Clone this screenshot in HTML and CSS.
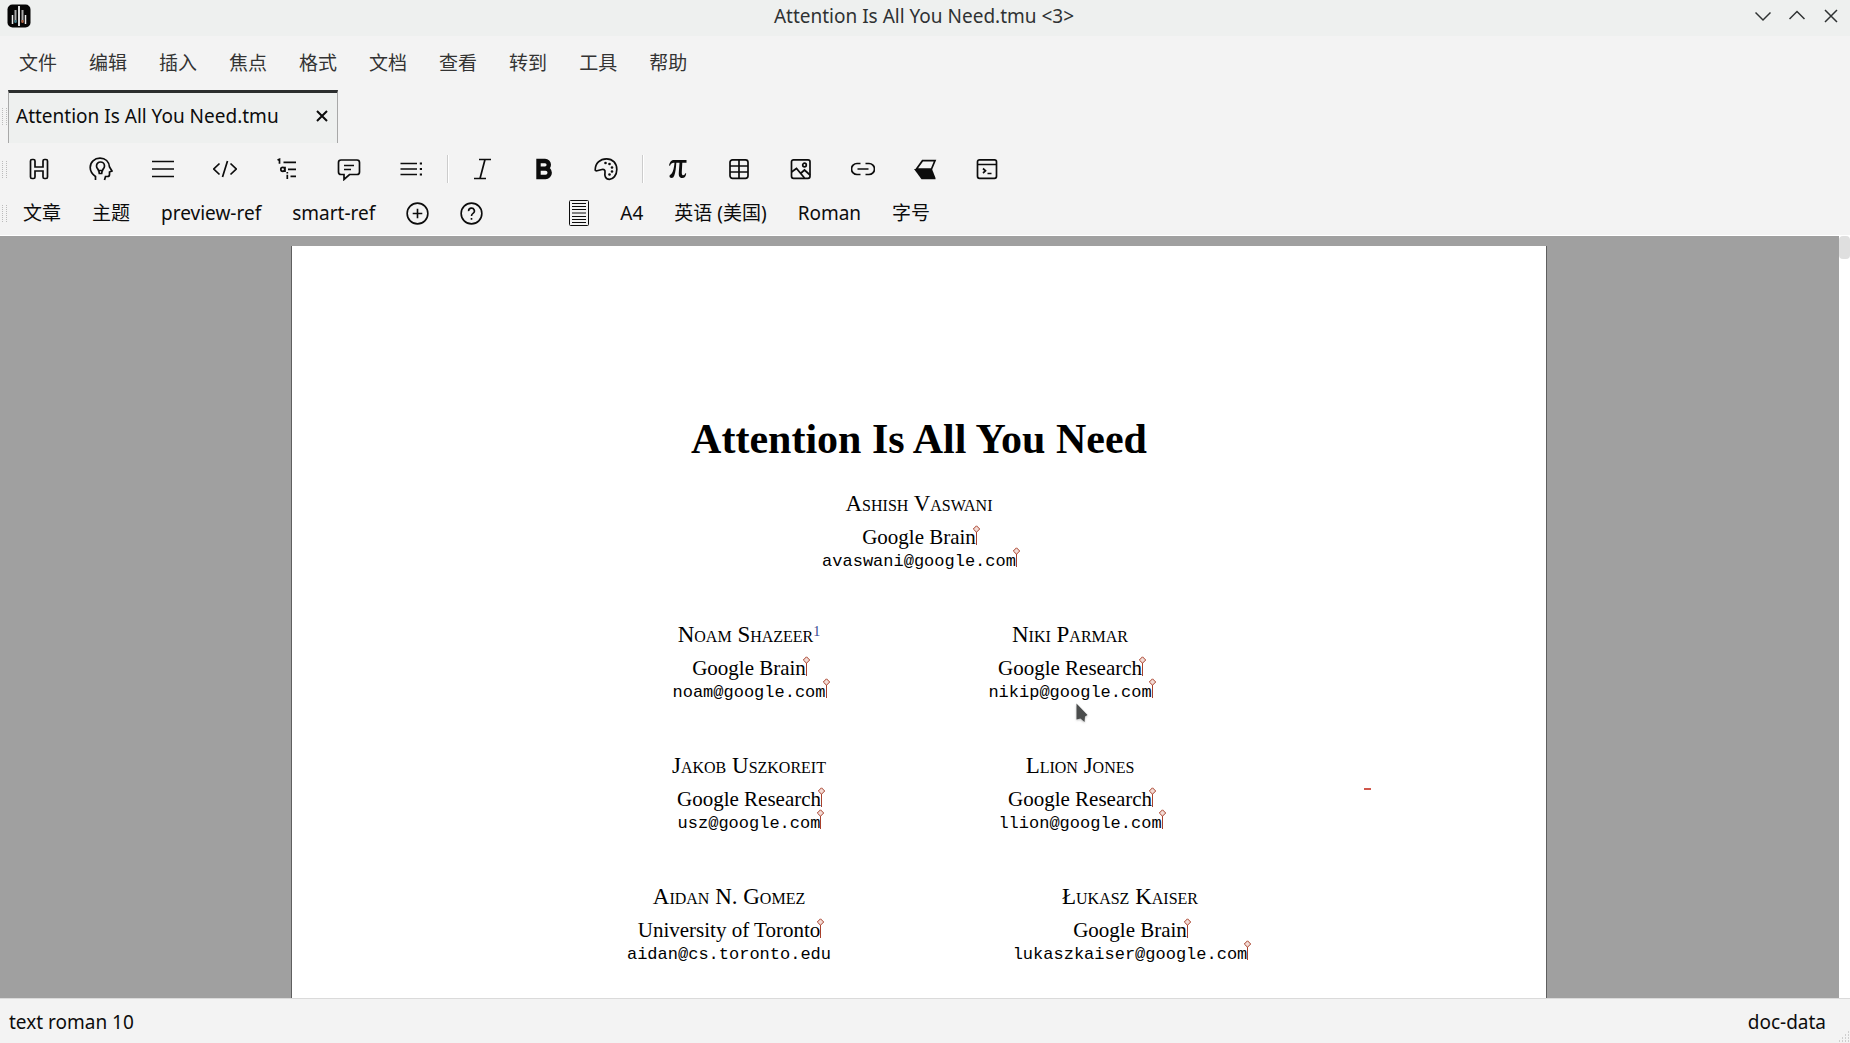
FILE: index.html
```html
<!DOCTYPE html>
<html lang="zh-CN">
<head>
  <meta charset="UTF-8">
  <meta name="viewport" content="width=device-width, initial-scale=1.0">
  <title>Attention Is All You Need.tmu</title>
  <link rel="stylesheet" href="styles.css">
</head>
<body>
  <!-- shared marker drawn at the end of a tagged line -->
  <svg class="defs" aria-hidden="true">
    <symbol id="pin" viewBox="0 0 9 20">
      <path d="M4.500 7V20" stroke="#a8402c" fill="none"/>
      <path d="M4.500 .8 7.700 4 4.500 7.200 1.300 4Z" fill="#f3dcd6" stroke="#a8402c"/>
    </symbol>
  </svg>

  <header class="titlebar">
    <svg class="app-icon" viewBox="0 0 24 24">
      <rect x=".5" y=".5" width="23" height="23" rx="5" fill="#050505"/>
      <path d="M12 2v20" stroke="#ddd" stroke-width="2"/>
      <path d="M8.500 6v12M15.500 6v12" stroke="#aaa" stroke-width="2"/>
      <path d="M5.500 11v9M18.500 11v9" stroke="#eee" stroke-width="1.500"/>
      <path d="M8.500 16v3" stroke="#3f7f8c" stroke-width="2"/>
      <path d="M15.500 16v3" stroke="#b0603f" stroke-width="2"/>
    </svg>
    <h1 class="window-title">Attention Is All You Need.tmu &lt;3&gt;</h1>
    <div class="window-buttons">
      <button aria-label="最小化"><svg viewBox="0 0 16 16"><path d="M.5 4.500 8 12l7.500-7.500"/></svg></button>
      <button aria-label="最大化"><svg viewBox="0 0 16 16"><path d="M.5 11 8 3.500 15.500 11"/></svg></button>
      <button aria-label="关闭"><svg viewBox="0 0 16 16"><path d="M2 2l12 12M14 2 2 14"/></svg></button>
    </div>
  </header>

  <nav class="menubar">
    <button>文件</button>
    <button>编辑</button>
    <button>插入</button>
    <button>焦点</button>
    <button>格式</button>
    <button>文档</button>
    <button>查看</button>
    <button>转到</button>
    <button>工具</button>
    <button>帮助</button>
  </nav>

  <div class="tabs">
    <span class="grip"></span>
    <div class="tab">
      <span>Attention Is All You Need.tmu</span>
      <button aria-label="关闭标签页"><svg viewBox="0 0 12 12"><path d="M1 1l10 10M11 1 1 11"/></svg></button>
    </div>
  </div>

  <div class="toolbar">
    <span class="grip"></span>
    <button aria-label="标题"><svg viewBox="0 0 24 24"><path d="M3.500 4q0-1.500 1.500-1.500h1.500q1.500 0 1.500 1.500v6h8V4q0-1.500 1.500-1.500H19q1.500 0 1.500 1.500v16q0 1.500-1.500 1.500h-1.500q-1.500 0-1.500-1.500v-6H8v6q0 1.500-1.500 1.500H5q-1.500 0-1.500-1.500Z"/></svg></button>
    <button aria-label="定理"><svg viewBox="0 0 24 24"><path d="M6.500 23v-3.500C3 17 1.200 14 1.200 10.500 1.200 5 5.500 1.200 11 1.200c5.500 0 9 3.800 9.500 8.800l2.500 4-2.500 1v2.500q0 2-2 2h-2L15.500 23M9.500 13.500c0-1.500-2-2-2-4.500a4 4 0 0 1 8 0c0 2.500-2 3-2 4.500ZM9.800 13.500l.5 3h2.400l.5-3"/></svg></button>
    <button aria-label="列表"><svg viewBox="0 0 24 24"><path d="M1 4.500h22M1 12h22M1 19.500h22"/></svg></button>
    <button aria-label="程序"><svg viewBox="0 0 24 24"><path d="M6.500 6.500.8 12l5.700 5.500M17.500 6.500l5.700 5.500-5.700 5.500M14.500 4l-5 16"/></svg></button>
    <button aria-label="编号"><svg viewBox="0 0 24 24"><path d="M8.500 5.300H21M13 12.300h8M15.500 19.300H21M2.500 3l2-.8v4.600M10 9.800v5.200M9.800 12.300a2 2 0 1 0-4 0 2 2 0 0 0 4 0M12.300 17.800V22M12.300 15v1.500"/></svg></button>
    <button aria-label="注释"><svg viewBox="0 0 24 24"><path d="M4 3h16q2.500 0 2.500 2.500V15q0 2.500-2.500 2.500h-7.500L7 22.500v-5H4q-2.500 0-2.500-2.500V5.500Q1.500 3 4 3ZM7 8.500h10M7 12.500h7"/></svg></button>
    <button aria-label="描述"><svg viewBox="0 0 24 24"><path d="M1.500 6.500H18M1.500 12H18M1.500 17.500H18"/><path d="M20.800 6.500h2.200M20.800 12h2.200M20.800 17.500h2.200" stroke-width="2.200"/></svg></button>
    <span class="separator"></span>
    <button aria-label="斜体"><svg viewBox="0 0 24 24"><path d="M9 2.500h12M4 21.500h12M15 2.500l-5 19"/></svg></button>
    <button aria-label="粗体"><svg viewBox="0 0 24 24"><path d="M6.500 4H13a3.800 3.800 0 0 1 0 7.600H6.500V20h7a4.200 4.200 0 0 0 0-8.400H6.500Z" stroke-width="4.400"/></svg></button>
    <button aria-label="颜色"><svg viewBox="0 0 24 24"><path d="M1.200 13C1.200 6.500 6 1.800 12.500 1.800S22.800 6.500 22.800 12.500 19 22.300 15.500 22.300c-4.500 0-5-4-4.500-7 .3-2-1-3.300-3-2.800l-4 1Q1.200 14.300 1.200 13Z"/><g class="solid"><circle cx="11.500" cy="6" r="1.300"/><circle cx="15.500" cy="7" r="1.300"/><circle cx="18" cy="10.500" r="1.300"/><circle cx="18" cy="14.500" r="1.300"/><circle cx="15.500" cy="17.500" r="1.300"/></g></svg></button>
    <span class="separator"></span>
    <button aria-label="数学"><svg viewBox="0 0 24 24"><path class="solid" d="M4 8.500C5 4.500 6.500 3 9 3h12.500v2.800h-4.200l-.5 9.200c-.1 2.500.4 3.300 1.500 3.300 1 0 1.600-.8 1.900-2l1 .2c-.4 3-1.600 4.500-4 4.500-3 0-3.600-2.300-3.400-5.500l.7-9.700h-3.200c-.3 5.500-.8 9.500-2 12.700-.6 1.700-1.500 2.500-2.800 2.500-1.200 0-2-.7-2-1.700 0-.9.5-1.500 1.500-2C8 15.500 9 11 9.500 5.800H8.800C6.800 5.800 6 6.500 5 8.800Z"/></svg></button>
    <button aria-label="表格"><svg viewBox="0 0 24 24"><rect x="3" y="2.800" width="18" height="18.500" rx="2.500"/><path d="M3 9h18M3 15h18M12 3v18"/></svg></button>
    <button aria-label="图片"><svg viewBox="0 0 24 24"><rect x="2.500" y="2.800" width="18.500" height="18.500" rx="2"/><circle cx="15.500" cy="8" r="1.800"/><path d="M2.500 15 7.500 11.500l8 9.500M11.500 16.500l4-3.500 5.500 5"/></svg></button>
    <button aria-label="链接"><svg viewBox="0 0 24 24"><path d="M9.500 6.500H6a5.500 5.500 0 0 0 0 11h3.500M14.500 6.500H18a5.500 5.500 0 0 1 0 11h-3.500M6.500 12h11"/></svg></button>
    <button aria-label="清除"><svg viewBox="0 0 24 24"><path d="M3.500 12 9.500 3.700H22L18.500 12Z"/><path class="solid" d="M1 12h18l3.500 9v1.300H8.500Z"/></svg></button>
    <button aria-label="会话"><svg viewBox="0 0 24 24"><rect x="2.500" y="2.800" width="19" height="18.500" rx="2"/><path d="M2.500 7.500h19M8 11.500l2.500 2.300L8 16M12.500 16.500h4"/></svg></button>
  </div>

  <div class="toolbar modes">
    <span class="grip"></span>
    <button>文章</button>
    <button>主题</button>
    <button>preview-ref</button>
    <button>smart-ref</button>
    <button aria-label="添加"><svg viewBox="0 0 24 24"><circle cx="12" cy="12" r="10.800"/><path d="M12 7v10M7 12h10"/></svg></button>
    <button aria-label="帮助"><svg viewBox="0 0 24 24"><circle cx="12" cy="12" r="10.800"/><path d="M9 9.500a3 3 0 1 1 4.600 2.400q-1.600 1-1.600 2.600M12 16.800v1.600"/></svg></button>
    <button class="page-format" aria-label="页面"><svg viewBox="0 0 20 26"><rect x=".5" y=".5" width="19" height="25" rx="1"/><path d="M3 3.500h14M3 6.500h14M3 19.500h14M3 22.500h14M3 9.500h14M3 13h14M3 16.500h14"/></svg></button>
    <button>A4</button>
    <button>英语 (美国)</button>
    <button>Roman</button>
    <button>字号</button>
  </div>

  <main class="canvas">
    <article class="page">
      <h2>Attention Is All You Need</h2>

      <div class="author">
        <h3>Ashish Vaswani</h3>
        <p><span>Google Brain<svg class="pin"><use href="#pin"/></svg></span></p>
        <p class="email"><span>avaswani@google.com<svg class="pin"><use href="#pin"/></svg></span></p>
      </div>

      <div class="authors first">
        <div class="author">
          <h3>Noam Shazeer<a class="note" href="#note1">1</a></h3>
          <p><span>Google Brain<svg class="pin"><use href="#pin"/></svg></span></p>
          <p class="email"><span>noam@google.com<svg class="pin"><use href="#pin"/></svg></span></p>
        </div>
        <div class="author">
          <h3>Niki Parmar</h3>
          <p><span>Google Research<svg class="pin"><use href="#pin"/></svg></span></p>
          <p class="email"><span>nikip@google.com<svg class="pin"><use href="#pin"/></svg></span></p>
        </div>
      </div>

      <div class="authors second">
        <div class="author">
          <h3>Jakob Uszkoreit</h3>
          <p><span>Google Research<svg class="pin"><use href="#pin"/></svg></span></p>
          <p class="email"><span>usz@google.com<svg class="pin"><use href="#pin"/></svg></span></p>
        </div>
        <div class="author">
          <h3>Llion Jones</h3>
          <p><span>Google Research<svg class="pin"><use href="#pin"/></svg></span></p>
          <p class="email"><span>llion@google.com<svg class="pin"><use href="#pin"/></svg></span></p>
        </div>
      </div>

      <div class="authors third">
        <div class="author">
          <h3>Aidan N. Gomez</h3>
          <p><span>University of Toronto<svg class="pin"><use href="#pin"/></svg></span></p>
          <p class="email"><span>aidan@cs.toronto.edu</span></p>
        </div>
        <div class="author">
          <h3>Łukasz Kaiser</h3>
          <p><span>Google Brain<svg class="pin"><use href="#pin"/></svg></span></p>
          <p class="email"><span>lukaszkaiser@google.com<svg class="pin"><use href="#pin"/></svg></span></p>
        </div>
      </div>

      <span class="caret"></span>
      <svg class="pointer" viewBox="0 0 12 20"><path d="M.5.500V16.500L4.500 15.500 8.500 19 9 13.500 11.500 12Z" fill="#4a4c4c"/></svg>
    </article>
    <div class="scrollbar"><div class="thumb"></div></div>
  </main>

  <footer class="statusbar">
    <span>text roman 10</span>
    <span>doc-data</span>
    <svg class="resize" viewBox="0 0 12 12"><path d="M10 1h1M7 4h1M10 4h1M4 7h1M7 7h1M10 7h1M1 10h1M4 10h1M7 10h1M10 10h1"/></svg>
  </footer>
</body>
</html>
```
FILE: styles.css
```css
* {
  box-sizing: border-box;
}
body {
  margin: 0;
  height: 100vh;
  display: flex;
  flex-direction: column;
  overflow: hidden;
  background: #f3f3f3;
  color: #0c0c0c;
  font: 19px/28px "Noto Sans", "Noto Sans CJK SC", sans-serif;
}
button {
  padding: 0;
  border: none;
  background: none;
  color: inherit;
  font: inherit;
  display: flex;
  align-items: center;
  justify-content: center;
}
svg {
  display: block;
  fill: none;
  stroke: currentColor;
  stroke-width: 1.5;
}
.defs {
  position: absolute;
  width: 0;
  height: 0;
}
.solid {
  fill: currentColor;
  stroke: none;
}

/* title bar */
.titlebar {
  display: grid;
  grid-template-columns: 1fr auto 1fr;
  align-items: center;
  height: 36px;
  padding: 0 9px 5px 7px;
  background: #eef0ef;
  color: #2f3233;
}
.app-icon {
  width: 24px;
  height: 24px;
  stroke: none;
}
.window-title {
  margin: 0;
  font-size: 19px;
  font-weight: 400;
}
.window-buttons {
  display: flex;
  justify-content: flex-end;
  gap: 18px;
  padding-right: 2px;
}
.window-buttons svg {
  width: 16px;
  height: 16px;
}

/* menus */
.menubar {
  display: flex;
  gap: 32px;
  height: 54px;
  padding: 0 19px;
  color: #333;
}

/* tabs */
.tabs {
  display: flex;
  align-items: center;
  height: 53px;
}
.grip {
  width: 5px;
  height: 17px;
  margin: 0 1px 0 2px;
  border: dotted #bbb;
  border-width: 0 1px;
}
.tab {
  display: flex;
  align-items: center;
  justify-content: space-between;
  width: 330px;
  height: 53px;
  padding: 0 9px 4px 7px;
  border: 1px solid #a8a8a8;
  border-top: 3px solid #2c2e2e;
  border-bottom: none;
  background: #eef0ef;
}
.tab svg {
  width: 12px;
  height: 12px;
  stroke-width: 2;
}

/* toolbars */
.toolbar {
  display: flex;
  align-items: center;
  height: 52px;
}
.toolbar button {
  width: 62px;
}
.toolbar svg {
  width: 24px;
  height: 24px;
  stroke-width: 1.7;
}
.separator {
  width: 2px;
  height: 28px;
  margin: 0 2px 0 5px;
  border-left: 1px solid #ccc;
  background: #fff;
}
.modes {
  gap: 31px;
  height: 41px;
  padding-bottom: 4px;
  border-bottom: 1px solid #fff;
}
.modes .grip {
  margin-right: -15px;
}
.toolbar.modes button {
  width: auto;
}
.modes svg {
  width: 23px;
  height: 23px;
}
.toolbar .page-format {
  margin-left: 55px;
}
.toolbar .page-format svg {
  width: 20px;
  height: 26px;
  stroke-width: 1;
}

/* document */
.canvas {
  position: relative;
  flex: 1;
  min-height: 0;
  padding: 10px 12px 0 0;
  overflow: hidden;
  background: #a0a0a0;
}
.page {
  position: relative;
  width: 1256px;
  height: 1400px;
  margin: 0 auto;
  padding-top: 165px;
  border: solid #5f5f5f;
  border-width: 0 1px;
  background: #fff;
  color: #000;
  font: 21px/24px "Liberation Serif", serif;
}
.page h2 {
  margin: 0 0 23px;
  font-size: 42px;
  line-height: 56px;
  text-align: center;
}
.author {
  margin-bottom: 46px;
  text-align: center;
}
.author h3 {
  margin: 0 0 7px;
  font-size: 23px;
  font-weight: 400;
  font-variant: small-caps;
  line-height: 28px;
}
.author p {
  margin: 0;
}
.author span {
  position: relative;
}
.author .email {
  font-family: "Liberation Mono", monospace;
  font-size: 17px;
  line-height: 26px;
}
.authors {
  display: grid;
  justify-content: center;
}
.first {
  grid-template-columns: 302px 340px;
}
.second {
  grid-template-columns: 322px 340px;
}
.third {
  grid-template-columns: 422px 380px;
}
.note {
  color: #36478f;
  font-size: 14px;
  line-height: 1;
  text-decoration: none;
  vertical-align: 6px;
}
.pin {
  position: absolute;
  right: -5px;
  bottom: 4px;
  width: 9px;
  height: 20px;
  stroke-width: 1;
}
.caret {
  position: absolute;
  top: 542px;
  left: 1072px;
  width: 7px;
  height: 2px;
  background: #d0574c;
}
.pointer {
  position: absolute;
  top: 457px;
  left: 784px;
  width: 12px;
  height: 20px;
  stroke: none;
  filter: drop-shadow(0 1px 1px #bbb);
}
.scrollbar {
  position: absolute;
  top: 0;
  right: 0;
  bottom: 0;
  width: 11px;
  background: #fff;
}
.thumb {
  height: 23px;
  border-radius: 4px;
  background: #dfdfdf;
}

/* status bar */
.statusbar {
  position: relative;
  display: flex;
  align-items: center;
  justify-content: space-between;
  height: 45px;
  padding: 2px 24px 0 9px;
  border-top: 1px solid #dadada;
}
.resize {
  position: absolute;
  right: 0;
  bottom: 0;
  width: 12px;
  height: 12px;
  stroke: #aaa;
  stroke-width: 1;
}
```
